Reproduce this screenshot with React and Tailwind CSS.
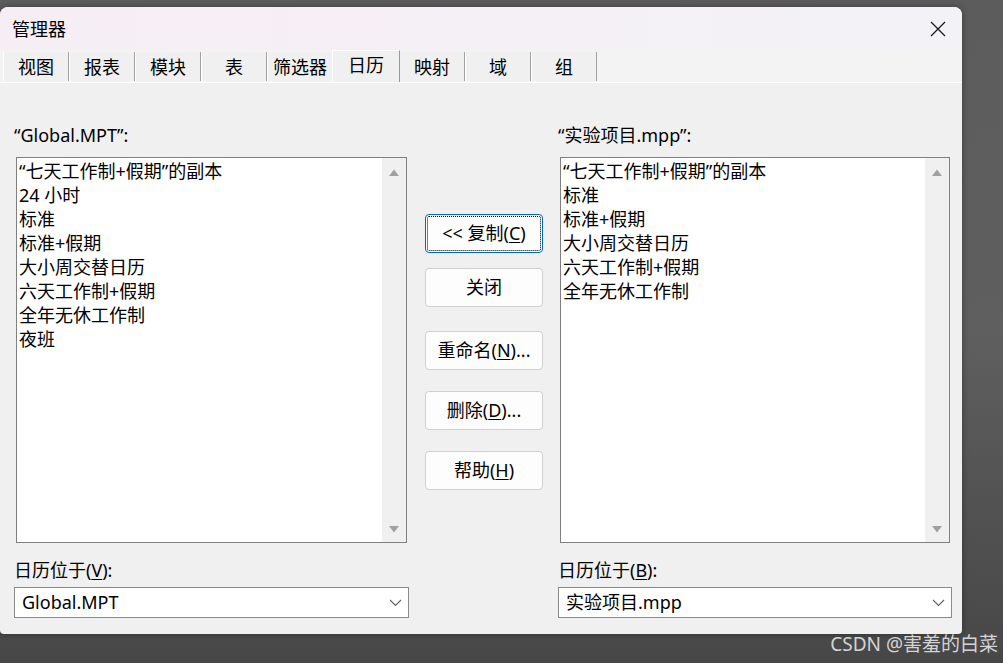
const FONT = { fontFamily: '"Noto Sans", "Noto Sans CJK SC", sans-serif' };

const TABS = ['视图', '报表', '模块', '表', '筛选器', '日历', '映射', '域', '组'];

const LEFT_ITEMS = [
  '“七天工作制+假期”的副本',
  '24 小时',
  '标准',
  '标准+假期',
  '大小周交替日历',
  '六天工作制+假期',
  '全年无休工作制',
  '夜班',
];

const RIGHT_ITEMS = [
  '“七天工作制+假期”的副本',
  '标准',
  '标准+假期',
  '大小周交替日历',
  '六天工作制+假期',
  '全年无休工作制',
];

function Tab({ label, active }) {
  if (active) {
    return (
      <div className="relative z-10 -mx-[1px] flex h-[32px] w-[68px] items-center justify-center self-start border-l border-r border-t border-l-white border-r-[#9a9a9a] border-t-white bg-[#f0f0f0] pb-[2px]">
        {label}
      </div>
    );
  }
  return (
    <div className="mt-[2px] flex h-[29px] w-[66px] items-center justify-center border-l border-r border-l-white border-r-[#a0a0a0] bg-[#f0f0f0] pt-[2px]">
      {label}
    </div>
  );
}

function ListBox({ items }) {
  return (
    <div className="mx-[2px] flex h-[386px] border border-[#7f7f7f] bg-white">
      <div className="flex-1 pl-[2px] pt-[1px] leading-[24px]">
        {items.map(t => (
          <div key={t} className="whitespace-nowrap">{t}</div>
        ))}
      </div>
      {/* Scrollbar */}
      <div className="flex w-[24px] flex-col items-center justify-between bg-[#f0f0f0] pb-[8px] pt-[10px]">
        <svg width="12" height="8" viewBox="0 0 12 8">
          <path d="M1 8 L6 1.5 L11 8 Z" fill="#a0a0a0" />
        </svg>
        <svg width="12" height="8" viewBox="0 0 12 8">
          <path d="M1 0 L11 0 L6 6.5 Z" fill="#a0a0a0" />
        </svg>
      </div>
    </div>
  );
}

function Combo({ value }) {
  return (
    <div className="flex h-[31px] items-center justify-between border border-[#8a8a8a] bg-white pl-[7px] pr-[6px]">
      <span>{value}</span>
      <svg width="13" height="8" viewBox="0 0 13 8">
        <path d="M1 1 L6.5 6.5 L12 1" fill="none" stroke="#606060" strokeWidth="1.1" />
      </svg>
    </div>
  );
}

function Btn({ children, focused, className = '' }) {
  if (focused) {
    return (
      <div className={`h-[39px] rounded-[4px] border border-[#0067c0] bg-[#fdfdfd] p-[1px] ${className}`}>
        <div className="flex h-full items-center justify-center rounded-[2px] border border-dotted border-black">
          {children}
        </div>
      </div>
    );
  }
  return (
    <div className={`flex h-[39px] items-center justify-center rounded-[4px] border border-[#d0d0d0] bg-[#fdfdfd] ${className}`}>
      {children}
    </div>
  );
}

export default function App() {
  return (
    <div
      style={FONT}
      className="relative h-[663px] w-[1003px] overflow-hidden bg-gradient-to-b from-[#5c5c5c] via-[#5f5f5f] to-[#474747] pt-[7px] text-[18px] text-black"
    >
      <div className="flex h-[627px] w-[962px] flex-col overflow-hidden rounded-t-[8px] rounded-b-[4px] bg-[#f0f0f0] shadow-[0_0_6px_rgba(0,0,0,0.35)]">
        {/* Title bar */}
        <div className="flex h-[43px] shrink-0 items-center justify-between bg-gradient-to-r from-[#f7eef5] to-[#f2f2f7] pl-[12px] pr-[16px]">
          <span className="pt-[1px]">管理器</span>
          <svg width="16" height="16" viewBox="0 0 16 16">
            <path d="M1 1 L15 15 M15 1 L1 15" stroke="#1a1a1a" strokeWidth="1.3" />
          </svg>
        </div>

        {/* Tabs */}
        <div className="flex h-[32px] shrink-0 bg-[#f3f3f3] pl-[3px]">
          {TABS.map(t => (
            <Tab key={t} label={t} active={t === '日历'} />
          ))}
        </div>

        {/* Panel */}
        <div className="flex flex-1 border-t border-white pl-[14px] pt-[40px]">
          <div className="flex w-[395px] flex-col">
            <div className="leading-[24px]">“Global.MPT”:</div>
            <div className="mt-[10px]">
              <ListBox items={LEFT_ITEMS} />
            </div>
            <div className="mt-[15px] leading-[24px]">
              日历位于(<span className="underline underline-offset-2">V</span>):
            </div>
            <div className="mt-[5px]">
              <Combo value="Global.MPT" />
            </div>
          </div>

          <div className="ml-[16px] flex w-[118px] flex-col pt-[91px]">
            <Btn focused>
              &lt;&lt; 复制(<span className="underline underline-offset-2">C</span>)
            </Btn>
            <Btn className="mt-[15px]">关闭</Btn>
            <Btn className="mt-[24px]">
              重命名(<span className="underline underline-offset-2">N</span>)...
            </Btn>
            <Btn className="mt-[21px]">
              删除(<span className="underline underline-offset-2">D</span>)...
            </Btn>
            <Btn className="mt-[21px]">
              帮助(<span className="underline underline-offset-2">H</span>)
            </Btn>
          </div>

          <div className="ml-[15px] flex w-[394px] flex-col">
            <div className="leading-[24px]">“实验项目.mpp”:</div>
            <div className="mt-[10px]">
              <ListBox items={RIGHT_ITEMS} />
            </div>
            <div className="mt-[15px] leading-[24px]">
              日历位于(<span className="underline underline-offset-2">B</span>):
            </div>
            <div className="mt-[5px]">
              <Combo value="实验项目.mpp" />
            </div>
          </div>
        </div>
      </div>

      <div className="absolute bottom-[5px] right-[5px] text-[19px] text-[#d4d4d4]">CSDN @害羞的白菜</div>
    </div>
  );
}
